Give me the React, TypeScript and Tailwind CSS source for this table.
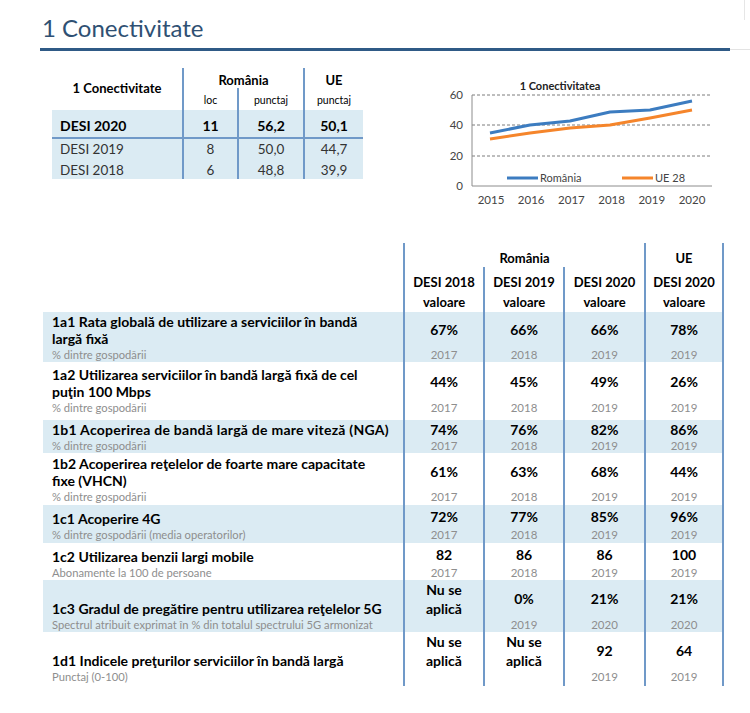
import React from "react";

type Row = {
  title: string[];
  sub: string;
  values: string[][];
  years: string[];
  main: number;
  subH: number;
  shaded: boolean;
  wide?: boolean;
};

const rows: Row[] = [
  {
    title: ["1a1 Rata globală de utilizare a serviciilor în bandă", "largă fixă"],
    sub: "% dintre gospodării",
    values: [["67%"], ["66%"], ["66%"], ["78%"]],
    years: ["2017", "2018", "2019", "2019"],
    main: 35,
    subH: 15,
    shaded: true,
  },
  {
    title: ["1a2 Utilizarea serviciilor în bandă largă fixă de cel", "puţin 100 Mbps"],
    sub: "% dintre gospodării",
    values: [["44%"], ["45%"], ["49%"], ["26%"]],
    years: ["2017", "2018", "2019", "2019"],
    main: 38,
    subH: 20,
    shaded: false,
  },
  {
    title: ["1b1 Acoperirea de bandă largă de mare viteză (NGA)"],
    sub: "% dintre gospodării",
    values: [["74%"], ["76%"], ["82%"], ["86%"]],
    years: ["2017", "2018", "2019", "2019"],
    main: 18,
    subH: 15,
    shaded: true,
    wide: true,
  },
  {
    title: ["1b2 Acoperirea reţelelor de foarte mare capacitate", "fixe (VHCN)"],
    sub: "% dintre gospodării",
    values: [["61%"], ["63%"], ["68%"], ["44%"]],
    years: ["2017", "2018", "2019", "2019"],
    main: 36,
    subH: 16,
    shaded: false,
  },
  {
    title: ["1c1 Acoperire 4G"],
    sub: "% dintre gospodării (media operatorilor)",
    values: [["72%"], ["77%"], ["85%"], ["96%"]],
    years: ["2017", "2018", "2019", "2019"],
    main: 22,
    subH: 16,
    shaded: true,
  },
  {
    title: ["1c2 Utilizarea benzii largi mobile"],
    sub: "Abonamente la 100 de persoane",
    values: [["82"], ["86"], ["86"], ["100"]],
    years: ["2017", "2018", "2019", "2019"],
    main: 22,
    subH: 15,
    shaded: false,
  },
  {
    title: ["1c3 Gradul de pregătire pentru utilizarea reţelelor 5G"],
    sub: "Spectrul atribuit exprimat în % din totalul spectrului 5G armonizat",
    values: [["Nu se", "aplică"], ["0%"], ["21%"], ["21%"]],
    years: ["", "2019", "2020", "2020"],
    main: 37,
    subH: 15,
    shaded: true,
  },
  {
    title: ["1d1 Indicele preţurilor serviciilor în bandă largă"],
    sub: "Punctaj (0-100)",
    values: [["Nu se", "aplică"], ["Nu se", "aplică"], ["92"], ["64"]],
    years: ["", "", "2019", "2019"],
    main: 37,
    subH: 17,
    shaded: false,
  },
];

const blue = [
  [60, 65],
  [100, 57],
  [140, 53],
  [180, 44],
  [220, 42],
  [262, 33],
];
const orange = [
  [60, 71],
  [100, 65],
  [140, 60],
  [180, 57],
  [220, 50],
  [262, 42],
];

function Chart() {
  const pts = (p: number[][]) => p.map((q) => q.join(",")).join(" ");
  return (
    <svg width="300" height="145" className="block" style={{ fontFamily: "Lato, 'Liberation Sans', sans-serif" }}>
      <text x="130" y="22" textAnchor="middle" fontSize="11" fontWeight="700" fill="#222">
        1 Conectivitatea
      </text>
      {[27, 57, 88].map((y) => (
        <line key={y} x1="42" x2="282" y1={y} y2={y} stroke="#7c7c7c" strokeWidth="1" strokeDasharray="3 2" />
      ))}
      <line x1="42" x2="42" y1="27" y2="118" stroke="#8c8c8c" strokeWidth="1" />
      <line x1="42" x2="282" y1="118" y2="118" stroke="#8c8c8c" strokeWidth="1" />
      {[
        ["60", 27],
        ["40", 57],
        ["20", 88],
        ["0", 118],
      ].map(([t, y]) => (
        <text key={t} x="33" y={Number(y) + 4} textAnchor="end" fontSize="11.5" fill="#444">
          {t}
        </text>
      ))}
      {["2015", "2016", "2017", "2018", "2019", "2020"].map((t, i) => (
        <text key={t} x={61 + i * 40.2} y="136" textAnchor="middle" fontSize="11.5" fill="#444">
          {t}
        </text>
      ))}
      <polyline points={pts(orange)} fill="none" stroke="#f5852b" strokeWidth="3" strokeLinejoin="round" />
      <polyline points={pts(blue)} fill="none" stroke="#3c7cc0" strokeWidth="3" strokeLinejoin="round" />
      <line x1="77" x2="108" y1="110" y2="110" stroke="#3c7cc0" strokeWidth="3" />
      <text x="110" y="114" fontSize="11" fill="#444">
        România
      </text>
      <line x1="192" x2="223" y1="110" y2="110" stroke="#f5852b" strokeWidth="3" />
      <text x="225" y="114" fontSize="11" fill="#444">
        UE 28
      </text>
    </svg>
  );
}

export default function App() {
  return (
    <div className="relative h-[713px] w-[750px] overflow-hidden bg-white font-['Lato','Liberation_Sans',sans-serif] text-black">
      {/* faint page edge */}
      <div className="absolute right-[5px] top-0 h-[20px] w-px bg-[#e6e6e6]" />

      <h1 className="pl-[42px] pt-[13px] text-[24px] font-normal leading-[30px] text-[#2f5073]">1 Conectivitate</h1>
      <div className="mt-[5px] flex items-center">
        <div className="ml-[40px] h-[3px] w-[690px] bg-[#2f5a86]" />
        <div className="h-px flex-1 bg-[#e3e3e3]" />
      </div>

      {/* top section */}
      <div className="mt-[17px] flex">
        <div className="ml-[52px] w-[311px]">
          <div className="grid grid-cols-[130px_55px_66px_60px] grid-rows-[20px_22px]">
            <div className="row-span-2 flex items-center justify-center text-[13px] font-bold">1 Conectivitate</div>
            <div className="col-span-2 flex items-end justify-center border-l-2 border-[#7099c8] text-[13px] font-bold leading-[16px]">
              România
            </div>
            <div className="flex items-end justify-center border-l-2 border-[#7099c8] text-[13px] font-bold leading-[16px]">
              UE
            </div>
            <div className="flex items-end justify-center border-l-2 border-[#7099c8] pb-[1px] text-[10.5px]">loc</div>
            <div className="flex items-end justify-center border-l-2 border-[#7099c8] pb-[1px] text-[10.5px]">punctaj</div>
            <div className="flex items-end justify-center border-l-2 border-[#7099c8] pb-[1px] text-[10.5px]">punctaj</div>
          </div>
          <div className="bg-[#dbebf3]">
            <div className="grid h-[29px] grid-cols-[130px_55px_66px_60px] border-b-2 border-[#7099c8] text-[14px] font-bold leading-[17px]">
              <div className="pl-[8px] pt-[7px]">DESI 2020</div>
              <div className="border-l-2 border-[#7099c8] pt-[7px] text-center">11</div>
              <div className="border-l-2 border-[#7099c8] pt-[7px] text-center">56,2</div>
              <div className="border-l-2 border-[#7099c8] pt-[7px] text-center">50,1</div>
            </div>
            <div className="grid h-[21px] grid-cols-[130px_55px_66px_60px] text-[13.5px] leading-[17px] text-[#333]">
              <div className="pl-[8px] pt-[2px]">DESI 2019</div>
              <div className="border-l-2 border-[#7099c8] pt-[2px] text-center">8</div>
              <div className="border-l-2 border-[#7099c8] pt-[2px] text-center">50,0</div>
              <div className="border-l-2 border-[#7099c8] pt-[2px] text-center">44,7</div>
            </div>
            <div className="grid h-[19px] grid-cols-[130px_55px_66px_60px] text-[13.5px] leading-[17px] text-[#333]">
              <div className="pl-[8px] pt-[2px]">DESI 2018</div>
              <div className="border-l-2 border-[#7099c8] pt-[2px] text-center">6</div>
              <div className="border-l-2 border-[#7099c8] pt-[2px] text-center">48,8</div>
              <div className="border-l-2 border-[#7099c8] pt-[2px] text-center">39,9</div>
            </div>
          </div>
        </div>
        <div className="ml-[67px]">
          <Chart />
        </div>
      </div>

      {/* main table */}
      <div className="ml-[43px] mt-[30px] w-[681px]">
        <div className="grid grid-cols-[360px_80px_80px_81px_80px] grid-rows-[24px_45px] text-[13px] font-bold">
          <div className="row-span-2" />
          <div className="col-span-3 flex items-end justify-center border-l-2 border-[#7099c8] leading-[18px]">România</div>
          <div className="flex items-end justify-center border-x-2 border-[#7099c8] leading-[18px]">UE</div>
          {["DESI 2018", "DESI 2019", "DESI 2020", "DESI 2020"].map((t, i) => (
            <div
              key={i}
              className={`flex flex-col items-center pt-[5px] leading-[20px] ${i === 3 ? "border-x-2" : "border-l-2"} border-[#7099c8]`}
            >
              <span>{t}</span>
              <span>valoare</span>
            </div>
          ))}
        </div>
        {rows.map((r, ri) => (
          <div
            key={ri}
            className={`grid grid-cols-[360px_80px_80px_81px_80px] ${r.shaded ? "bg-[#dbebf3]" : ""}`}
          >
            <div className="pl-[9px]">
              <div
                className={`flex flex-col justify-end text-[14px] font-bold leading-[17px] ${r.wide ? "tracking-[0.25px]" : ""}`}
                style={{ height: r.main }}
              >
                {r.title.map((t) => (
                  <span key={t} className="whitespace-nowrap">
                    {t}
                  </span>
                ))}
              </div>
              <div className="whitespace-nowrap text-[11.2px] leading-[15px] text-[#8e8e8e]" style={{ height: r.subH }}>
                {r.sub}
              </div>
            </div>
            {r.values.map((v, vi) => (
              <div key={vi} className={`${vi === 3 ? "border-x-2" : "border-l-2"} border-[#7099c8]`}>
                <div
                  className="flex flex-col items-center justify-center text-[14px] font-bold leading-[19px]"
                  style={{ height: r.main }}
                >
                  {v.map((t) => (
                    <span key={t}>{t}</span>
                  ))}
                </div>
                <div className="text-center text-[11.5px] leading-[16px] text-[#8e8e8e]" style={{ height: r.subH }}>
                  {r.years[vi]}
                </div>
              </div>
            ))}
          </div>
        ))}
      </div>
    </div>
  );
}
